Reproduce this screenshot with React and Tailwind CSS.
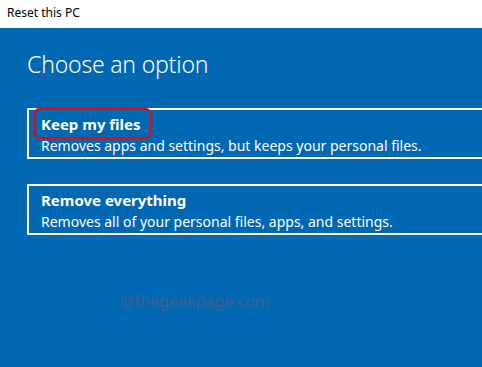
import React from 'react';

const options = [
  {
    title: 'Keep my files',
    desc: 'Removes apps and settings, but keeps your personal files.',
    highlight: true,
  },
  {
    title: 'Remove everything',
    desc: 'Removes all of your personal files, apps, and settings.',
    highlight: false,
  },
];

const App = () => {
  return (
    <div className="w-[482px] h-[367px] overflow-hidden flex flex-col bg-[#0067b2] font-['Noto_Sans','Open_Sans',sans-serif]">
      <div className="h-[28px] shrink-0 bg-white pl-[7px] pt-[5px] text-[12px] leading-[16px] text-black">
        Reset this PC
      </div>

      <div className="pl-[27px] pt-[21px] text-white">
        <h1 className="text-[23px] leading-[30px] font-light tracking-[-0.2px]">Choose an option</h1>

        <div className="mt-[29px] flex flex-col gap-[25px]">
          {options.map(opt => (
            <div
              key={opt.title}
              className="w-[480px] h-[51px] border-2 border-white pl-[12px] pt-[2px]"
            >
              <div className="relative">
                <span className="text-[15px] leading-[20px] font-bold">{opt.title}</span>
                {opt.highlight && (
                  <div className="absolute left-[-7px] top-[-4px] w-[117px] h-[31px] rounded-[5px] border-2 border-[#ff0000]" />
                )}
              </div>
              <div className="text-[14px] leading-[20px] whitespace-nowrap">{opt.desc}</div>
            </div>
          ))}
        </div>

        <div className="mt-[54px] ml-[93px] text-[16px] text-[#3d5f93]">@thegeekpage.com</div>
      </div>
    </div>
  );
};

export default App;
